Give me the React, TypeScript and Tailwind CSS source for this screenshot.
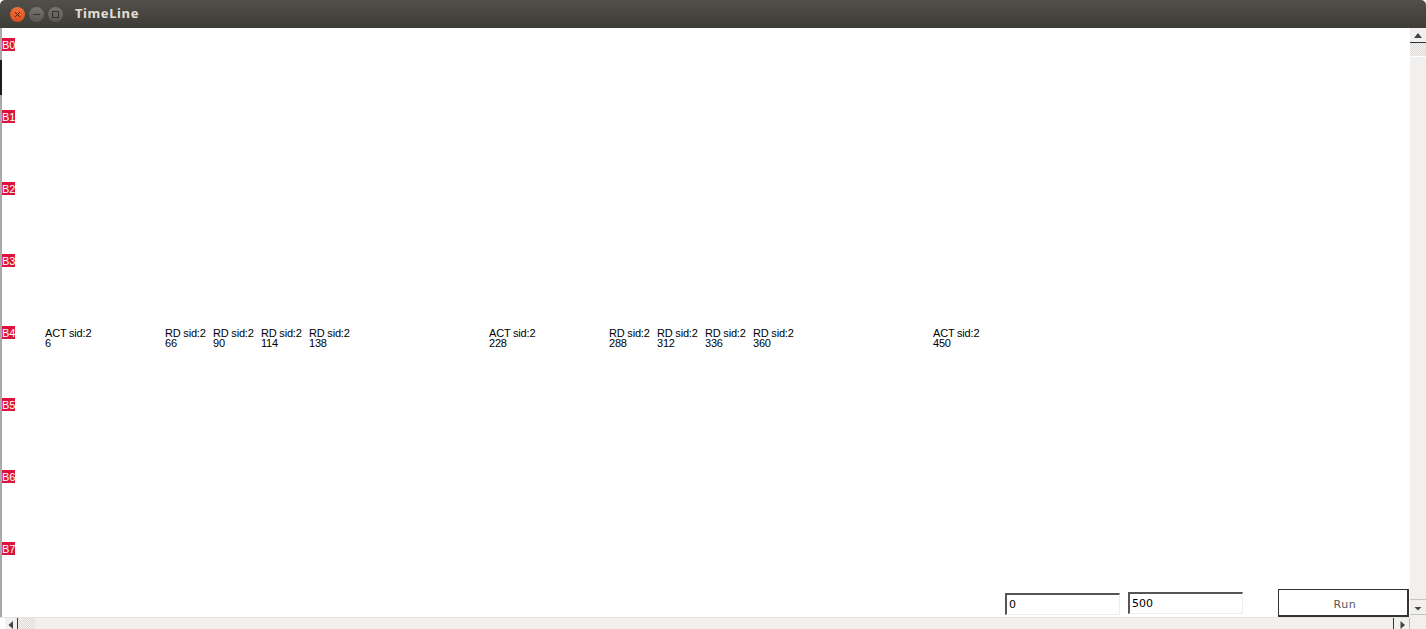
const rows = ['B0', 'B1', 'B2', 'B3', 'B4', 'B5', 'B6', 'B7']

const events = [
  { label: 'ACT sid:2', time: 6 },
  { label: 'RD sid:2', time: 66 },
  { label: 'RD sid:2', time: 90 },
  { label: 'RD sid:2', time: 114 },
  { label: 'RD sid:2', time: 138 },
  { label: 'ACT sid:2', time: 228 },
  { label: 'RD sid:2', time: 288 },
  { label: 'RD sid:2', time: 312 },
  { label: 'RD sid:2', time: 336 },
  { label: 'RD sid:2', time: 360 },
  { label: 'ACT sid:2', time: 450 },
]

const checker = 'bg-[repeating-conic-gradient(#dad9d7_0%_25%,#f6f5f4_0%_50%)] bg-[length:2px_2px]'

function WinButton({ kind }: { kind: 'close' | 'min' | 'max' }) {
  const bg = kind === 'close' ? 'from-[#f0703a] to-[#d84f22]' : 'from-[#77746d] to-[#5a5752]'
  return (
    <div className={`flex h-[15px] w-[15px] items-center justify-center rounded-full bg-gradient-to-b ${bg}`}>
      <svg width="9" height="9" viewBox="0 0 9 9" fill="none" stroke={kind === 'close' ? '#5a1f0c' : '#35332f'} strokeWidth="1">
        {kind === 'close' && <path d="M2 2l5 5M7 2l-5 5" />}
        {kind === 'min' && <path d="M1 4.5h7" />}
        {kind === 'max' && <rect x="1.5" y="1.5" width="6" height="6" />}
      </svg>
    </div>
  )
}

function Arrow({ dir }: { dir: 'up' | 'down' | 'left' | 'right' }) {
  const d = {
    up: 'M1 8L5 3l4 5z',
    down: 'M1.5 5h7L5 8.5z',
    left: 'M7 1v8L2.5 5z',
    right: 'M3.5 1v8L8 5z',
  }[dir]
  return (
    <svg width="10" height="10" viewBox="0 0 10 10" fill="#444">
      <path d={d} />
    </svg>
  )
}

export default function App() {
  return (
    <div className="flex h-[629px] w-[1426px] flex-col overflow-hidden bg-white font-['Liberation_Sans',sans-serif]">
      {/* Title bar */}
      <div className="flex h-[28px] shrink-0 items-center rounded-t-[5px] bg-gradient-to-b from-[#514f48] to-[#3e3c37] pl-[10px]">
        <div className="flex gap-[4px]">
          <WinButton kind="close" />
          <WinButton kind="min" />
          <WinButton kind="max" />
        </div>
        <span className="ml-[12px] font-['Noto_Sans',sans-serif] text-[13px] font-bold tracking-[0.6px] text-[#e4e0d8]">TimeLine</span>
      </div>

      <div className="flex min-h-0 flex-1">
        <div className="flex min-w-0 flex-1 flex-col">
          <div className="flex min-h-0 flex-1">
            {/* Window edge */}
            <div className="flex w-[2px] shrink-0 flex-col bg-[#a9a9a9]">
              <div className="mt-[32px] h-[35px] bg-[#1c1c1c]" />
            </div>

            {/* Timeline canvas */}
            <div className="relative min-w-0 flex-1 pt-[10px]">
              {rows.map(row => (
                <div key={row} className="h-[72px]">
                  <div className="h-[13px] w-[13px] overflow-hidden bg-[#dc143c] text-[11px] leading-[14px] text-white">{row}</div>
                </div>
              ))}

              {events.map(e => (
                <div
                  key={e.time}
                  className="absolute top-[300px] text-[11px] leading-[10px] tracking-[-0.2px] text-black"
                  style={{ left: 31 + e.time * 2 }}
                >
                  <div>{e.label}</div>
                  <div>{e.time}</div>
                </div>
              ))}

              <input
                readOnly
                value="0"
                className="absolute left-[1003px] top-[565px] h-[22px] w-[115px] border-t-2 border-l-2 border-r border-b border-t-[#555] border-l-[#555] border-r-[#eee] border-b-[#eee] pl-[2px] font-['DejaVu_Sans',sans-serif] text-[11px] text-black outline-none"
              />
              <input
                readOnly
                value="500"
                className="absolute left-[1126px] top-[564px] h-[22px] w-[115px] border-t-2 border-l-2 border-r border-b border-t-[#555] border-l-[#555] border-r-[#eee] border-b-[#eee] pl-[2px] font-['DejaVu_Sans',sans-serif] text-[11px] text-black outline-none"
              />
              <button className="absolute left-[1276px] top-[561px] h-[28px] w-[131px] border border-r-2 border-b-2 border-[#333] bg-white pt-[6px] pl-[4px] font-['DejaVu_Sans',sans-serif] text-[11px] tracking-[0.6px] text-[#555]">
                Run
              </button>
            </div>
          </div>

          {/* Horizontal scrollbar */}
          <div className="flex h-[12px] shrink-0 items-stretch border-t border-[#e4e3e1] bg-[#f1f0ef]">
            <div className="w-[5px] bg-white" />
            <div className="flex w-[12px] items-center justify-center pt-[2px]"><Arrow dir="left" /></div>
            <div className="w-px bg-[#333]" />
            <div className={`w-[17px] ${checker}`} />
            <div className="flex-1" />
            <div className="w-px bg-[#333]" />
            <div className="flex w-[15px] items-center justify-center pt-[2px]"><Arrow dir="right" /></div>
            <div className="w-px bg-[#bdbcba]" />
          </div>
        </div>

        {/* Vertical scrollbar */}
        <div className="flex w-[16px] shrink-0 flex-col bg-[#f1f0ef]">
          <div className="flex h-[14px] items-center justify-center"><Arrow dir="up" /></div>
          <div className="h-px bg-[#333]" />
          <div className={`h-[13px] ${checker}`} />
          <div className="flex-1 border-t border-white" />
          <div className="h-px bg-[#c4c3c1]" />
          <div className="flex h-[14px] items-center justify-center"><Arrow dir="down" /></div>
          <div className="h-px bg-[#c4c3c1]" />
          <div className="h-[14px]" />
        </div>
      </div>
    </div>
  )
}
